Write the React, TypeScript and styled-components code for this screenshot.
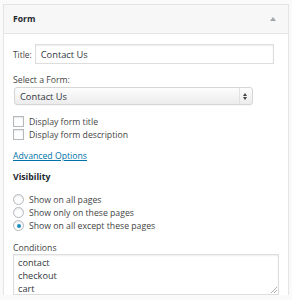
import React from "react";
import styled, { createGlobalStyle } from "styled-components";

const GlobalStyle = createGlobalStyle`
    body {
        margin: 0;
        background: #fafafa;
        font-family: "Open Sans", "Liberation Sans", sans-serif;
        color: #444;
    }
`;

const Page = styled.div`
    padding: 4px 3px 0 3px;
`;

const Panel = styled.div`
    width: 284px;
    background: #fff;
    border: 1px solid #e5e5e5;
    border-bottom: none;
    box-shadow: 0 1px 1px rgba(0, 0, 0, 0.04);
`;

const PanelHeader = styled.div`
    height: 28px;
    display: flex;
    align-items: center;
    justify-content: space-between;
    padding: 0 12px 0 9px;
    background: #f7f7f7;
    border-bottom: 1px solid #e5e5e5;
`;

const PanelTitle = styled.span`
    font-size: 8.6px;
    font-weight: 700;
    color: #23282d;
`;

const Toggle = styled.span`
    width: 0;
    height: 0;
    border-left: 3px solid transparent;
    border-right: 3px solid transparent;
    border-bottom: 4px solid #a0a5aa;
`;

const Body = styled.div`
    padding: 10px 9px 0 9px;
    font-size: 8.7px;
`;

const TitleRow = styled.div`
    display: flex;
    align-items: center;
    gap: 3px;
    height: 20px;
`;

const Label = styled.label`
    font-size: 8.4px;
`;

const TextInput = styled.input`
    box-sizing: border-box;
    width: 239px;
    height: 20px;
    border: 1px solid #ddd;
    box-shadow: inset 0 1px 2px rgba(0, 0, 0, 0.07);
    padding: 0 5px;
    font-family: inherit;
    font-size: 9.3px;
    color: #32373c;
    outline: none;
`;

const FieldLabel = styled.div<{ $bold?: boolean; $top: number }>`
    margin-top: ${(p) => p.$top}px;
    line-height: 12px;
    font-weight: ${(p) => (p.$bold ? 700 : 400)};
    color: ${(p) => (p.$bold ? "#23282d" : "#444")};
`;

const Select = styled.div`
    box-sizing: border-box;
    margin: 1px 0 0 1px;
    width: 239px;
    height: 18px;
    display: flex;
    align-items: stretch;
    border: 1px solid #d6d6d6;
    border-radius: 3px;
    background: linear-gradient(#fdfdfd, #ececec);
    box-shadow: 0 1px 0 rgba(0, 0, 0, 0.03);
    font-size: 9.3px;
    color: #32373c;
`;

const SelectValue = styled.span`
    flex: 1;
    display: flex;
    align-items: center;
    padding-left: 5px;
`;

const SelectArrows = styled.span`
    width: 10px;
    border-left: 1px solid #e2e2e2;
    display: flex;
    flex-direction: column;
    align-items: center;
    justify-content: center;
    gap: 1px;
    margin-right: 2px;
`;

const Arrow = styled.span<{ $down?: boolean }>`
    width: 0;
    height: 0;
    border-left: 2px solid transparent;
    border-right: 2px solid transparent;
    ${(p) => (p.$down ? "border-top: 3px solid #444;" : "border-bottom: 3px solid #444;")}
`;

const OptionList = styled.div<{ $top: number }>`
    margin-top: ${(p) => p.$top}px;
`;

const OptionRow = styled.div`
    display: flex;
    align-items: center;
    gap: 5px;
    height: 13px;
`;

const Checkbox = styled.span`
    box-sizing: border-box;
    width: 11px;
    height: 11px;
    border: 1px solid #b4b9be;
    background: #fff;
    box-shadow: inset 0 1px 2px rgba(0, 0, 0, 0.1);
`;

const Radio = styled.span<{ $checked?: boolean }>`
    box-sizing: border-box;
    width: 11px;
    height: 11px;
    border-radius: 50%;
    border: 1px solid #b4b9be;
    background: #fff;
    box-shadow: inset 0 1px 2px rgba(0, 0, 0, 0.1);
    display: flex;
    align-items: center;
    justify-content: center;
    &::after {
        content: "";
        display: ${(p) => (p.$checked ? "block" : "none")};
        width: 4px;
        height: 4px;
        border-radius: 50%;
        background: #1e8cbe;
    }
`;

const Link = styled.a`
    display: inline-block;
    margin-top: 9px;
    line-height: 12px;
    color: #0073aa;
    text-decoration: underline;
`;

const Conditions = styled.div`
    position: relative;
    box-sizing: border-box;
    width: 266px;
    height: 41px;
    margin-top: 0;
    border: 1px solid #ddd;
    box-shadow: inset 0 1px 2px rgba(0, 0, 0, 0.07);
    padding: 1px 4px;
    font-size: 9.2px;
    line-height: 13px;
    color: #32373c;
`;

const Grip = styled.svg`
    position: absolute;
    right: 1px;
    bottom: 1px;
`;

const checks = ["Display form title", "Display form description"];
const visibility = ["Show on all pages", "Show only on these pages", "Show on all except these pages"];
const conditions = ["contact", "checkout", "cart"];

const App = () => (
    <>
        <GlobalStyle />
        <Page>
            <Panel>
                <PanelHeader>
                    <PanelTitle>Form</PanelTitle>
                    <Toggle />
                </PanelHeader>
                <Body>
                    <TitleRow>
                        <Label>Title:</Label>
                        <TextInput defaultValue="Contact Us" />
                    </TitleRow>
                    <FieldLabel $top={10}>Select a Form:</FieldLabel>
                    <Select>
                        <SelectValue>Contact Us</SelectValue>
                        <SelectArrows>
                            <Arrow />
                            <Arrow $down />
                        </SelectArrows>
                    </Select>
                    <OptionList $top={10}>
                        {checks.map((c) => (
                            <OptionRow key={c}>
                                <Checkbox />
                                {c}
                            </OptionRow>
                        ))}
                    </OptionList>
                    <Link>Advanced Options</Link>
                    <FieldLabel $bold $top={9}>Visibility</FieldLabel>
                    <OptionList $top={10}>
                        {visibility.map((v, i) => (
                            <OptionRow key={v}>
                                <Radio $checked={i === 2} />
                                {v}
                            </OptionRow>
                        ))}
                    </OptionList>
                    <FieldLabel $top={10}>Conditions</FieldLabel>
                    <Conditions>
                        {conditions.map((c) => (
                            <div key={c}>{c}</div>
                        ))}
                        <Grip width="6" height="6" viewBox="0 0 6 6">
                            <path d="M6 0L0 6M6 3L3 6" stroke="#999" strokeWidth="0.8" />
                        </Grip>
                    </Conditions>
                </Body>
            </Panel>
        </Page>
    </>
);

export default App;
